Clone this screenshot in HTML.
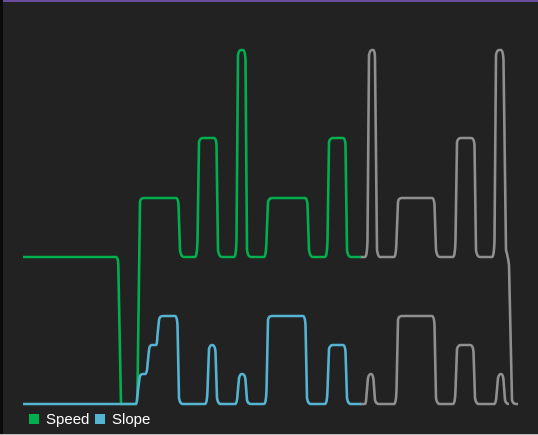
<!DOCTYPE html>
<html><head><style>
html,body{margin:0;padding:0;}
body{width:538px;height:435px;background:#222222;position:relative;overflow:hidden;font-family:"Liberation Sans",sans-serif;}
.top{position:absolute;left:0;top:0;width:538px;height:2px;background:#6a4c9c;}
.left{position:absolute;left:0;top:0;width:3px;height:435px;background:#0a0a0a;}
.bot{position:absolute;left:0;top:434px;width:538px;height:1px;background:#bbb;}
.leg{position:absolute;top:411px;color:#fff;font-size:15px;line-height:17px;}
.sq{position:absolute;top:414px;width:10px;height:10px;}
</style></head><body>
<div class="top"></div><div class="left"></div><div class="bot"></div>
<svg width="538" height="435" style="position:absolute;left:0;top:0" fill="none" stroke-width="2.6" stroke-linejoin="round">
<path stroke="#8f8f8f" d="M360 257 L365 257 Q367 257 367.5 240 L369 55 Q370 50 372 50 L373 50 Q375 50 375 60 L377 250 Q378 257 380 257 L394 257 Q396 257 396.5 240 L398 202 Q398.5 198 402 198 L432 198 Q434 198 434.5 205 L436 250 Q437 257 440 257 L453 257 Q455 257 455.5 240 L457 142 Q458 138 461 138 L471 138 Q474 138 474.5 145 L476 250 Q477 257 480 257 L492 257 Q494 257 494.5 240 L496 55 Q497 50 499 50 L501 50 Q503 50 503.5 60 L506 250 Q508 257 509 265 L512 400 Q513 404 516 404 L518 404"/>
<path stroke="#8f8f8f" d="M360 404 L365 404 Q366 404 366.5 395 L368 378 Q369 374 371 374 Q373 374 373.5 380 L375 400 Q376 404 379 404 L394 404 Q396 404 396.5 390 L398 320 Q398.5 316 402 316 L432 316 Q434 316 434.5 325 L436 398 Q437 404 440 404 L453 404 Q455 404 455.5 390 L457 349 Q458 345 461 345 L470 345 Q473 345 473.5 352 L475 398 Q476 404 479 404 L494 404 Q496 404 496.5 395 L498 378 Q499 374 501 374 Q503 374 503.5 380 L505 400 Q506 404 509 404"/>
<path stroke="#00b04f" d="M23 257 L116 257 Q118 257 118.3 265 L121 404 L136 404 Q137 404 137.5 390 L140 202 Q140.5 198 144 198 L176 198 Q178 198 178.5 205 L180 250 Q181 257 184 257 L195 257 Q197 257 197.5 240 L199 142 Q200 138 203 138 L214 138 Q216 138 216.5 145 L218 250 Q219 257 222 257 L234 257 Q236 257 236.5 240 L238 55 Q239 50 241 50 L243 50 Q245 50 245.5 60 L247 250 Q248 257 251 257 L264 257 Q266 257 266.5 240 L268 202 Q269 198 272 198 L305 198 Q307 198 307.5 205 L309 250 Q310 257 313 257 L325 257 Q327 257 327.5 240 L329 142 Q330 138 333 138 L343 138 Q345 138 345.5 145 L347 250 Q348 257 351 257 L361 257"/>
<path stroke="#55b4d2" d="M23 404 L136 404 Q137 404 138 390 L139.5 378 Q140 374 143 374 L145 374 Q147 374 147.5 365 L149 350 Q149.5 345 152 345 L156 345 Q157 345 157.5 335 L159 320 Q159.5 316 163 316 L175 316 Q177 316 177.5 325 L179 398 Q180 404 183 404 L205 404 Q207 404 207.5 390 L209 349 Q210 345 212 345 Q215 345 215.5 352 L217 398 Q218 404 221 404 L235 404 Q237 404 237.5 395 L239 378 Q240 374 242 374 Q245 374 245.5 380 L247 400 Q248 404 251 404 L264 404 Q266 404 266.5 390 L268 320 Q268.5 316 272 316 L303 316 Q305 316 305.5 325 L307 398 Q308 404 311 404 L325 404 Q327 404 327.5 390 L329 349 Q330 345 333 345 L343 345 Q345 345 345.5 352 L347 398 Q348 404 351 404 L361 404"/>
</svg>
<div class="sq" style="left:29px;background:#00b04f"></div>
<div class="leg" style="left:46px">Speed</div>
<div class="sq" style="left:95px;background:#55b4d2"></div>
<div class="leg" style="left:112px">Slope</div>
</body></html>
